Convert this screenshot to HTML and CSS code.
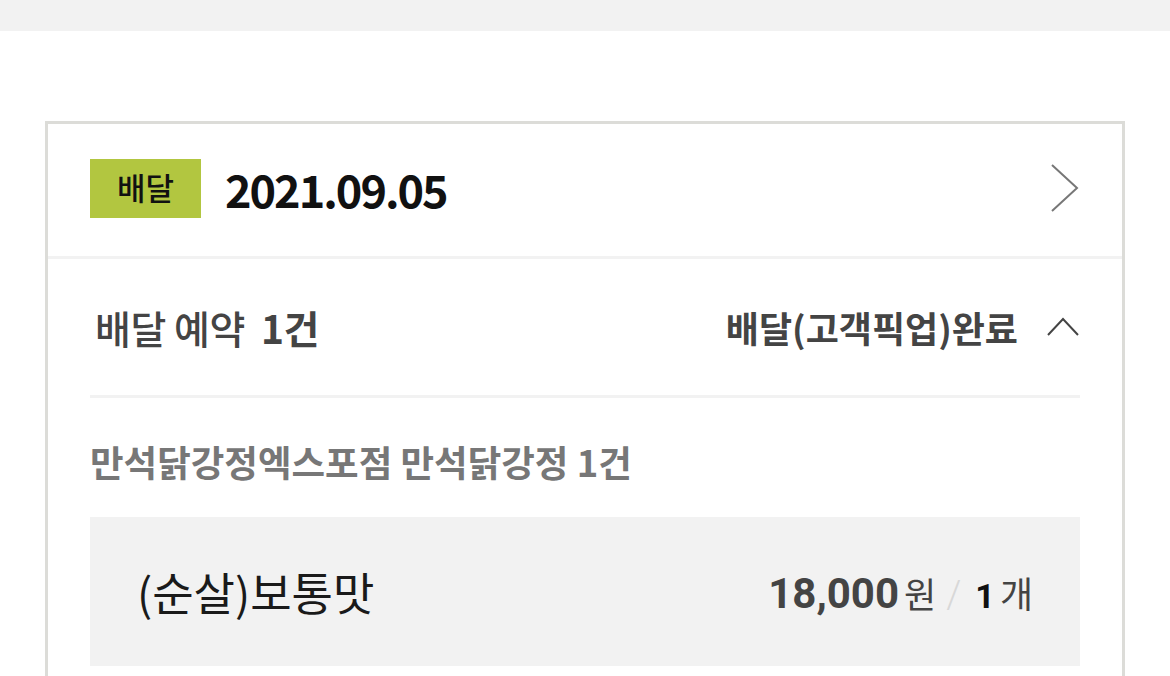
FILE: index.html
```html
<!DOCTYPE html>
<html>
<head>
	<title>주문내역</title>
	<meta charset="UTF-8">
	<link rel="stylesheet" href="styles.css">
</head>
<body>
	<div class="topBar"></div>
	<div class="orderWrap">
		<div class="orderCard">
			<div class="orderHead">
				<span class="badge">배달</span>
				<span class="date">2021.09.05</span>
				<svg class="arrowRight" width="30" height="50" viewBox="0 0 30 50">
					<polyline points="2,2 27,25 2,48" fill="none" stroke="#777" stroke-width="2"/>
				</svg>
			</div>
			<div class="orderBody">
				<div class="statusRow">
					<p class="statusTit">배달 예약 <b>1건</b></p>
					<p class="statusTxt">배달(고객픽업)완료
						<svg class="arrowUp" width="34" height="20" viewBox="0 0 34 20">
							<polyline points="2,18 17,2 32,18" fill="none" stroke="#444" stroke-width="2"/>
						</svg>
					</p>
				</div>
				<p class="storeName">만석닭강정엑스포점 만석닭강정 1건</p>
				<ul class="menuList">
					<li>
						<span class="menuName">(순살)보통맛</span>
						<span class="menuInfo">
							<span class="price">18,000<em>원</em></span>
							<span class="slash">/</span>
							<span class="count"><b>1</b>개</span>
						</span>
					</li>
				</ul>
			</div>
		</div>
	</div>
</body>
</html>
```

FILE: styles.css
```css
*{
	margin: 0;
	padding: 0;
}
li{
	list-style: none;
}
em{
	font-style: normal;
}
body{
	background: #fff;
	font-family: "Noto Sans CJK KR", "Noto Sans", sans-serif;
	color: #444;
}
.topBar{
	height: 31px;
	background: #f2f2f2;
}
.orderWrap{
	padding: 90px 45px 0;
}
.orderCard{
	border: 3px solid #dcdcd8;
	border-bottom: 0;
}
.orderHead{
	display: flex;
	align-items: center;
	height: 128px;
	padding: 0 42px 4px;
	border-bottom: 3px solid #f2f2f2;
}
.badge{
	width: 111px;
	height: 59px;
	line-height: 56px;
	text-align: center;
	background: #b2c640;
	color: #111;
	font-size: 31px;
	font-weight: 500;
}
.date{
	margin-left: 24px;
	font-size: 45px;
	font-weight: 700;
	color: #111;
	letter-spacing: -2px;
}
.arrowRight{
	margin-left: auto;
}
.orderBody{
	padding: 0 42px 10px;
}
.statusRow{
	display: flex;
	align-items: center;
	justify-content: space-between;
	height: 136px;
	border-bottom: 3px solid #f2f2f2;
}
.statusTit{
	padding-left: 5px;
	font-size: 39px;
	font-weight: 500;
	color: #444;
	letter-spacing: -0.5px;
}
.statusTit b{
	margin-left: 8px;
	font-weight: 700;
}
.statusTxt{
	display: flex;
	align-items: center;
	font-size: 36px;
	font-weight: 700;
	color: #444;
}
.arrowUp{
	margin-left: 28px;
}
.storeName{
	padding: 37px 0 29px;
	font-size: 36.5px;
	font-weight: 700;
	color: #777;
}
.menuList li{
	display: flex;
	align-items: center;
	justify-content: space-between;
	height: 149px;
	padding: 0 47px;
	background: #f2f2f2;
}
.menuName{
	font-size: 45px;
	font-weight: 400;
	color: #1a1a1a;
}
.menuInfo{
	display: flex;
	align-items: baseline;
}
.price{
	font-family: Roboto, "Noto Sans CJK KR", sans-serif;
	font-size: 42px;
	font-weight: 700;
	color: #444;
}
.price em{
	margin-left: 5px;
	font-family: "Noto Sans CJK KR", sans-serif;
	font-size: 35px;
	font-weight: 400;
}
.slash{
	margin: 0 14px 0 10px;
	font-family: Roboto, sans-serif;
	font-size: 38px;
	font-weight: 300;
	color: #d8d8d8;
}
.count{
	font-size: 36px;
	color: #444;
}
.count b{
	margin-right: 5px;
	font-family: Roboto, sans-serif;
	font-size: 34px;
	color: #111;
}
```
